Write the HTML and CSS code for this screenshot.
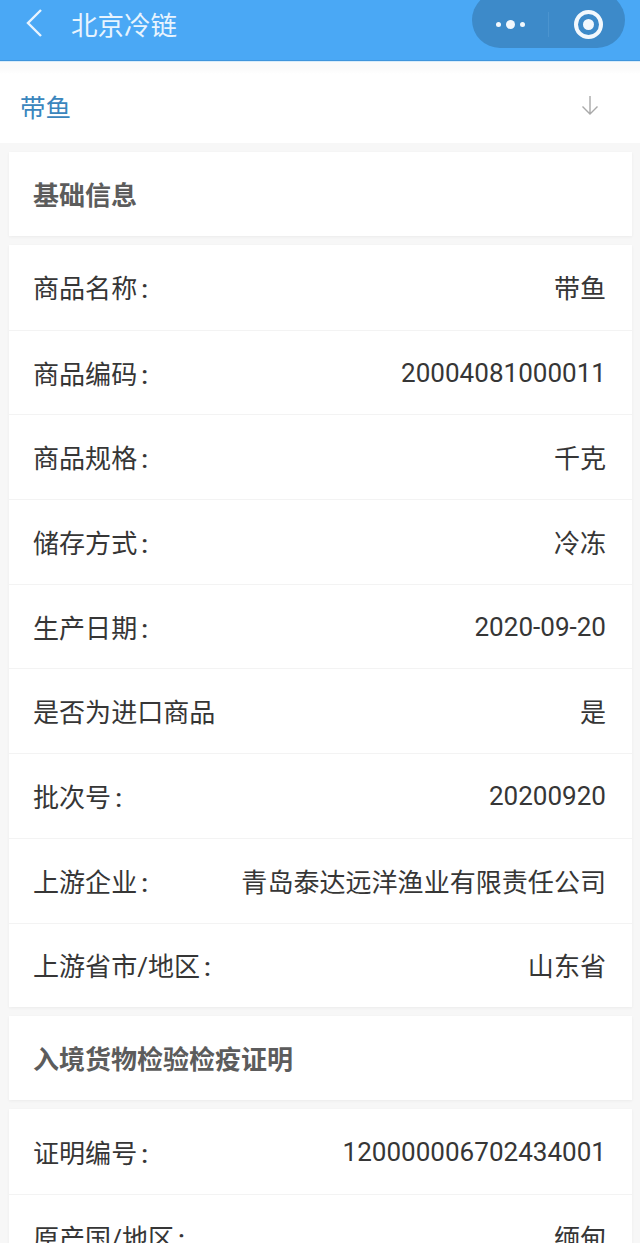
FILE: index.html
```html
<!DOCTYPE html>
<html lang="zh-CN">
<head>
    <meta charset="UTF-8">
    <meta name="viewport" content="width=device-width, initial-scale=1.0">
    <title>北京冷链</title>
    <link rel="stylesheet" href="styles.css">
</head>
<body>
    <div class="page">
        <div class="nav-bar">
            <svg class="nav-back" width="20" height="30" viewBox="0 0 20 30">
                <path d="M17 2 L4 15 L17 28" fill="none" stroke="#e8f4fe" stroke-width="2.4"/>
            </svg>
            <span class="nav-title">北京冷链</span>
            <div class="capsule">
                <div class="capsule-dots">
                    <i class="dot"></i><i class="dot dot-big"></i><i class="dot"></i>
                </div>
                <div class="capsule-line"></div>
                <div class="capsule-target"><i></i></div>
            </div>
        </div>

        <div class="select-row">
            <span class="select-name">带鱼</span>
            <svg width="20" height="22" viewBox="0 0 20 22">
                <path d="M10 2 V20 M2.5 12.5 L10 20 L17.5 12.5" fill="none" stroke="#a9a9a9" stroke-width="1.4"/>
            </svg>
        </div>

        <div class="card card-title">基础信息</div>

        <div class="card">
            <div class="row"><span>商品名称<i class="colon">:</i></span><span>带鱼</span></div>
            <div class="row"><span>商品编码<i class="colon">:</i></span><span>20004081000011</span></div>
            <div class="row"><span>商品规格<i class="colon">:</i></span><span>千克</span></div>
            <div class="row"><span>储存方式<i class="colon">:</i></span><span>冷冻</span></div>
            <div class="row"><span>生产日期<i class="colon">:</i></span><span>2020-09-20</span></div>
            <div class="row"><span>是否为进口商品</span><span>是</span></div>
            <div class="row"><span>批次号<i class="colon">:</i></span><span>20200920</span></div>
            <div class="row"><span>上游企业<i class="colon">:</i></span><span>青岛泰达远洋渔业有限责任公司</span></div>
            <div class="row"><span>上游省市/地区<i class="colon">:</i></span><span>山东省</span></div>
        </div>

        <div class="card card-title">入境货物检验检疫证明</div>

        <div class="card">
            <div class="row"><span>证明编号<i class="colon">:</i></span><span>120000006702434001</span></div>
            <div class="row"><span>原产国/地区<i class="colon">:</i></span><span>缅甸</span></div>
        </div>
    </div>
</body>
</html>
```

FILE: styles.css
```css
body {
    margin: 0;
    background: #f7f7f7;
    font-family: Roboto, "Noto Sans CJK SC", sans-serif;
    color: #363636;
}
.page {
    height: 1243px;
    overflow: hidden;
}
.nav-bar {
    height: 60px;
    background: #4aa8f5;
    border-bottom: 1px solid #3f95dc;
    display: flex;
    align-items: center;
    padding-left: 24px;
    position: relative;
}
.nav-title {
    color: #e8f4fe;
    font-size: 26.5px;
    margin-left: 27px;
    margin-top: -14px;
}
.nav-back {
    margin-top: -15px;
}
.capsule {
    position: absolute;
    right: 15px;
    top: -8px;
    width: 153px;
    height: 56px;
    box-sizing: border-box;
    padding-top: 8px;
    border-radius: 28px;
    background: #3d8ac9;
    display: flex;
    align-items: center;
}
.capsule-dots {
    width: 76px;
    display: flex;
    justify-content: center;
    align-items: center;
    gap: 5px;
}
.dot {
    width: 5px;
    height: 5px;
    border-radius: 50%;
    background: #f2f8fd;
}
.dot-big {
    width: 9px;
    height: 9px;
}
.capsule-line {
    width: 1px;
    height: 25px;
    background: #4b94cf;
}
.capsule-target {
    flex: 1;
    display: flex;
    justify-content: center;
    padding-left: 2px;
}
.capsule-target i {
    width: 29px;
    height: 29px;
    box-sizing: border-box;
    border: 4px solid #f2f8fd;
    border-radius: 50%;
    display: flex;
    align-items: center;
    justify-content: center;
}
.capsule-target i::after {
    content: "";
    width: 11px;
    height: 11px;
    border-radius: 50%;
    background: #f2f8fd;
}
.select-row {
    height: 82px;
    box-sizing: border-box;
    background: #fff;
    border-top: 1px solid #d8ecfa;
    display: flex;
    justify-content: space-between;
    align-items: center;
    padding: 5px 40px 0 20px;
    margin-bottom: 9px;
    background-image: linear-gradient(#fafafa 6px, #fff 12px);
}
.select-name {
    color: #3a86bd;
    font-size: 25.5px;
}
.card {
    background: #fff;
    margin: 0 8px 9px 9px;
    box-shadow: 0 1px 3px rgba(0, 0, 0, 0.05);
}
.card-title {
    height: 84px;
    line-height: 88px;
    padding-left: 24px;
    font-size: 26px;
    font-weight: 700;
    color: #5c5c5c;
}
.row {
    height: 84.7px;
    box-sizing: border-box;
    display: flex;
    justify-content: space-between;
    align-items: center;
    padding: 0 26px 0 24px;
    font-size: 26.05px;
}
.row + .row {
    border-top: 1px solid #f3f3f3;
}
.colon {
    font-style: normal;
    font-weight: 500;
    margin-left: 4px;
}
```
